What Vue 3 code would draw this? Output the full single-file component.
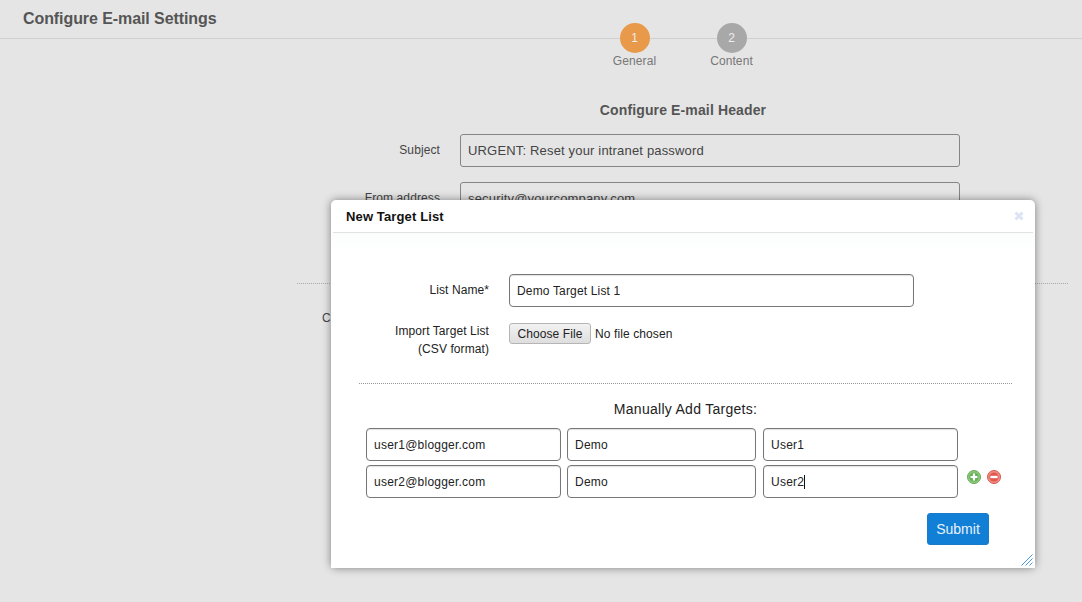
<script setup>
const targets = [
  { email: "user1@blogger.com", first: "Demo", last: "User1" },
  { email: "user2@blogger.com", first: "Demo", last: "User2" },
];
</script>

<template>
  <div class="page">
    <header class="top">
      <h1>Configure E-mail Settings</h1>
    </header>
    <div class="steps">
      <div class="step">
        <span class="dot orange">1</span>
        <span class="step-name">General</span>
      </div>
      <div class="step">
        <span class="dot grey">2</span>
        <span class="step-name">Content</span>
      </div>
    </div>
    <h2 class="form-title">Configure E-mail Header</h2>
    <div class="row">
      <label>Subject</label>
      <input class="bg-input" value="URGENT: Reset your intranet password" readonly />
    </div>
    <div class="row">
      <label>From address</label>
      <input class="bg-input" value="security@yourcompany.com" readonly />
    </div>
    <div class="bg-rule"></div>
    <p class="bg-cut">C</p>

    <div class="modal">
      <div class="modal-head">
        <span>New Target List</span>
        <svg class="close" width="10" height="10" viewBox="0 0 10 10">
          <path d="M1.5 1.5L8.5 8.5M8.5 1.5L1.5 8.5" stroke="#dce4f4" stroke-width="3" />
        </svg>
      </div>
      <div class="modal-body">
        <div class="field">
          <label class="name-label">List Name*</label>
          <input class="name-input" value="Demo Target List 1" readonly />
        </div>
        <div class="field import">
          <label>Import Target List<br />(CSV format)</label>
          <input type="file" class="file" />
        </div>
        <div class="rule"></div>
        <h3>Manually Add Targets:</h3>
        <div v-for="(t, i) in targets" :key="t.email" class="target">
          <input class="t-email" :value="t.email" readonly />
          <input class="t-first" :value="t.first" readonly />
          <div class="last-wrap">
            <input class="t-last" :value="t.last" readonly />
            <i v-if="i == 1" class="caret"></i>
          </div>
          <div v-if="i == 1" class="actions">
            <svg width="14" height="14" viewBox="0 0 14 14">
              <circle cx="7" cy="7" r="6.5" fill="#8cc97c" stroke="#6aa85a" />
              <circle cx="7" cy="7" r="4.6" fill="#67b056" />
              <path d="M7 3.6V10.4M3.6 7H10.4" stroke="#fff" stroke-width="2.2" />
            </svg>
            <svg width="14" height="14" viewBox="0 0 14 14">
              <circle cx="7" cy="7" r="6.5" fill="#ef8d85" stroke="#d9574e" />
              <circle cx="7" cy="7" r="4.6" fill="#e2574e" />
              <path d="M3.4 7H10.6" stroke="#fff" stroke-width="2.4" />
            </svg>
          </div>
        </div>
        <div class="submit-row">
          <button class="submit">Submit</button>
        </div>
      </div>
      <svg class="grip" width="12" height="12" viewBox="0 0 12 12">
        <path d="M0.5 11.5L11.5 0.5M4.5 11.5L11.5 4.5M8.5 11.5L11.5 8.5" stroke="#4a94dc" stroke-width="1" />
      </svg>
    </div>
  </div>
</template>

<style>
html,
body {
  margin: 0;
  background: #e5e5e5;
}
</style>

<style scoped>
.page {
  position: relative;
  width: 1082px;
  height: 602px;
  overflow: hidden;
  background: #e5e5e5;
  font-family: "Liberation Sans", Arial, sans-serif;
  color: #555;
}
.top {
  height: 38px;
  border-bottom: 1px solid #cfcfcf;
  padding-left: 23px;
}
.top h1 {
  margin: 0;
  padding-top: 10px;
  font-size: 16px;
  line-height: 18px;
  font-weight: bold;
  letter-spacing: -0.08px;
  color: #555;
}
.steps {
  display: flex;
  justify-content: center;
  gap: 37px;
  margin-top: -16px;
  padding-left: 284px;
  position: relative;
}
.step {
  width: 60px;
  display: flex;
  flex-direction: column;
  align-items: center;
}
.dot {
  width: 30px;
  height: 30px;
  border-radius: 50%;
  color: #eee;
  font-size: 12px;
  line-height: 30px;
  text-align: center;
}
.orange {
  background: #e8994a;
}
.grey {
  background: #a8a8a8;
}
.step-name {
  margin-top: 1px;
  font-size: 12px;
  line-height: 14px;
  letter-spacing: 0.1px;
  color: #777;
}
.form-title {
  margin: 33px 0 15px;
  padding-left: 284px;
  text-align: center;
  font-size: 14px;
  line-height: 18px;
  font-weight: bold;
  letter-spacing: 0.13px;
  color: #555;
}
.row {
  display: flex;
  align-items: center;
  margin-bottom: 15px;
}
.row label {
  width: 440px;
  text-align: right;
  font-size: 12px;
  letter-spacing: 0.1px;
  color: #444;
  margin-right: 20px;
  position: relative;
  top: -1px;
}
.bg-input {
  width: 500px;
  height: 33px;
  box-sizing: border-box;
  padding: 0 7px;
  border: 1px solid #858585;
  border-radius: 3px;
  background: #e5e5e5;
  font: 13px "Liberation Sans", Arial, sans-serif;
  letter-spacing: 0.17px;
  color: #444;
  outline: none;
}
.bg-rule {
  margin: 68px 14px 0 297px;
  border-top: 1px dotted #aaa;
}
.bg-cut {
  margin: 27px 0 0 322px;
  font-size: 12px;
  line-height: 14px;
  color: #444;
}
.modal {
  position: absolute;
  left: 331px;
  top: 200px;
  width: 704px;
  height: 368px;
  background: #fff;
  border-radius: 5px;
  box-shadow: 0 0 8px rgba(0, 0, 0, 0.45);
  color: #222;
}
.modal-head {
  height: 32px;
  margin: 0 2px;
  padding: 0 9px 0 13px;
  display: flex;
  align-items: center;
  justify-content: space-between;
  border-bottom: 1px solid #e2e2e2;
  font-size: 13px;
  font-weight: bold;
  letter-spacing: 0.13px;
  color: #111;
}
.modal-body {
  padding: 41px 23px 0 28px;
  background: linear-gradient(#fbfdfc, #fff 22px);
  height: 294px;
}
.field {
  display: flex;
  align-items: center;
}
.field label {
  width: 130px;
  margin-right: 20px;
  text-align: right;
  font-size: 12px;
  line-height: 18px;
  letter-spacing: 0.08px;
  color: #222;
}
.name-label {
  position: relative;
  top: -1px;
}
.name-input {
  width: 405px;
  height: 33px;
  box-sizing: border-box;
  padding: 0 7px;
  border: 1px solid #777;
  border-radius: 4px;
  box-shadow: inset 0 1px 1px rgba(0, 0, 0, 0.12);
  font: 12px "Liberation Sans", Arial, sans-serif;
  letter-spacing: 0.16px;
  color: #222;
  outline: none;
}
.import {
  align-items: flex-start;
  margin-top: 15px;
}
.file {
  margin-top: 1px;
  font: 12px "Liberation Sans", Arial, sans-serif;
  letter-spacing: 0.1px;
  color: #222;
}
.file::file-selector-button {
  width: 82px;
  height: 21px;
  margin-right: 4px;
  padding: 0;
  border: 1px solid #b5b5b5;
  border-radius: 3px;
  background: linear-gradient(#f2f2f2, #dedede);
  font: 12px "Liberation Sans", Arial, sans-serif;
  letter-spacing: 0.1px;
  color: #222;
}
.rule {
  margin-top: 25px;
  border-top: 1px dotted #999;
}
h3 {
  margin: 16px 0 10px;
  text-align: center;
  font-size: 14px;
  line-height: 18px;
  font-weight: normal;
  letter-spacing: 0.28px;
  color: #222;
}
.target {
  display: flex;
  align-items: center;
  margin: 0 0 4px 7px;
}
.target input {
  height: 33px;
  box-sizing: border-box;
  padding: 0 7px;
  border: 1px solid #777;
  border-radius: 4px;
  box-shadow: inset 0 1px 1px rgba(0, 0, 0, 0.12);
  font: 12px "Liberation Sans", Arial, sans-serif;
  letter-spacing: 0.23px;
  color: #222;
  outline: none;
  background: #fff;
}
.t-email {
  width: 195px;
  margin-right: 6px;
}
.t-first {
  width: 189px;
  margin-right: 7px;
}
.t-last {
  width: 195px;
  display: block;
}
.last-wrap {
  position: relative;
}
.caret {
  position: absolute;
  left: 41px;
  top: 10px;
  width: 1px;
  height: 14px;
  background: #111;
}
.actions {
  display: flex;
  gap: 6px;
  margin: -10px 0 0 9px;
}
.submit-row {
  display: flex;
  justify-content: flex-end;
  margin-top: 15px;
  padding-right: 23px;
}
.submit {
  width: 62px;
  height: 32px;
  padding: 0;
  border: 1px solid #1a7bc9;
  border-radius: 3px;
  background: #127fd6;
  color: #e8f2fb;
  font: 14px "Liberation Sans", Arial, sans-serif;
}
.grip {
  position: absolute;
  right: 2px;
  bottom: 2px;
}
</style>
